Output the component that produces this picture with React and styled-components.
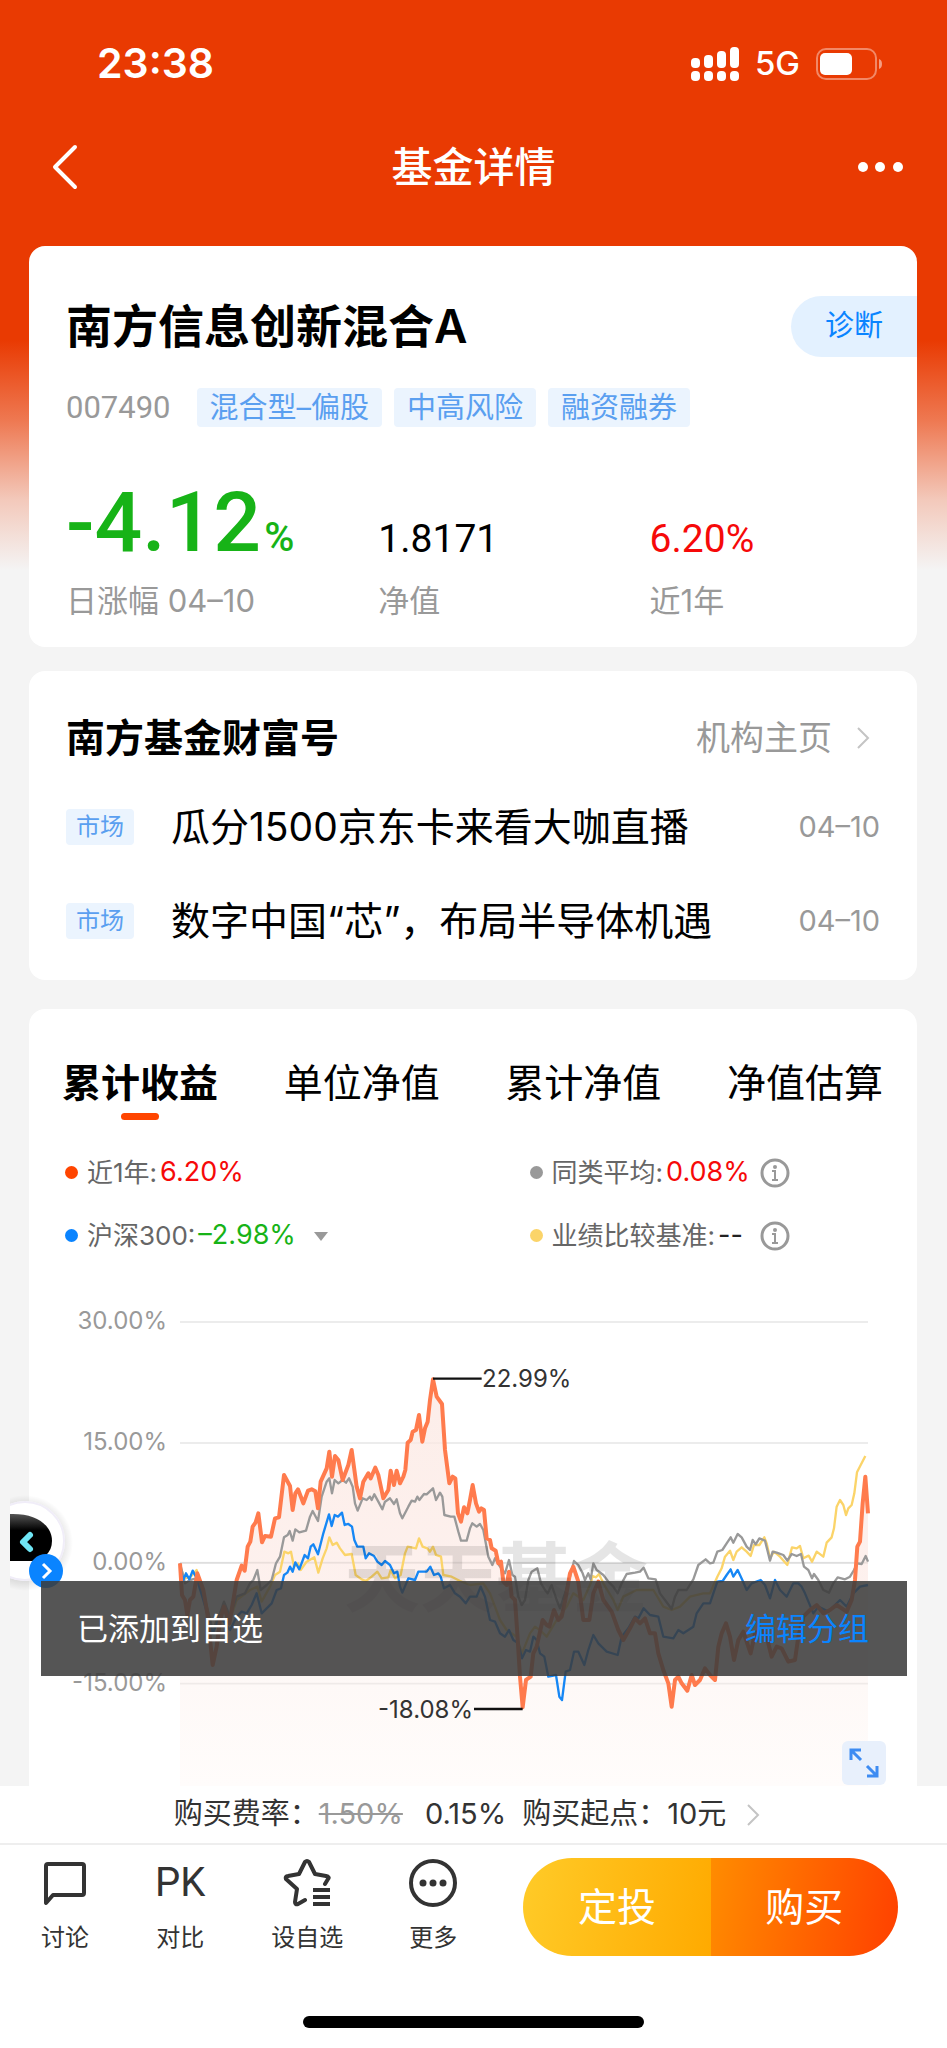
import React, {useState} from 'react';
import styled, {createGlobalStyle} from "styled-components";

const GlobalStyle = createGlobalStyle`
    * {
        box-sizing: border-box;
    }

    body {
        margin: 0;
        font-family: Inter, "Noto Sans CJK SC", sans-serif;
        line-height: 1.2;
        color: #000;
    }

    button {
        padding: 0;
        border: 0;
        background: none;
        font: inherit;
        color: inherit;
        cursor: pointer;
    }

    a {
        color: inherit;
        text-decoration: none;
    }

    svg {
        display: block;
        flex-shrink: 0;
    }

    h1, h2, p, ul {
        margin: 0;
        padding: 0;
    }
`;

const Page = styled.div`
    height: 100vh;
    display: flex;
    flex-direction: column;
    overflow: hidden;
    background: linear-gradient(#e93a02 340px, #ee7851 420px, #f3c9bb 500px, #f4f4f4 570px);
`;

const StatusBar = styled.div`
    display: flex;
    align-items: center;
    justify-content: space-between;
    height: 127px;
    padding: 0 64px 0 97px;
    color: #fff;
`;

const Clock = styled.span`
    font-size: 41px;
    font-weight: 600;
`;

const StatusIcons = styled.div`
    display: flex;
    align-items: center;
    gap: 16px;
    font-size: 33px;
    font-weight: 500;
`;

const NavBar = styled.header`
    display: grid;
    grid-template-columns: 1fr auto 1fr;
    align-items: center;
    height: 80px;
    padding: 0 43px;
    color: #fff;
`;

const NavTitle = styled.h1`
    font-size: 41px;
    line-height: 60px;
    font-weight: 500;
`;

const NavButton = styled.button`
    justify-self: ${(props) => (props.$end ? "end" : "start")};
`;

const Content = styled.main`
    position: relative;
    flex: 1;
    min-height: 0;
    overflow: hidden;
    padding: 39px 30px 0 29px;
`;

const Card = styled.section`
    border-radius: 16px;
    background: #fff;
`;

const FundCard = styled(Card)`
    margin-bottom: 24px;
    padding: 49px 0 26px 37px;
`;

const FundHead = styled.div`
    display: flex;
    align-items: center;
    justify-content: space-between;
`;

const FundName = styled.h2`
    font-size: 46px;
    line-height: 62px;
    font-weight: 600;
`;

const DiagnoseButton = styled.button`
    width: 126px;
    height: 61px;
    border-radius: 31px 0 0 31px;
    background: #e3f1ff;
    color: #0a84ff;
    font-size: 29px;
`;

const FundMeta = styled.div`
    display: flex;
    align-items: center;
    gap: 12px;
    margin-top: 31px;
`;

const FundCode = styled.span`
    margin-right: 14px;
    color: #999;
    font-family: Roboto, sans-serif;
    font-size: 31px;
    line-height: 39px;
`;

const Tag = styled.span`
    padding: 0 ${(props) => (props.$small ? 10 : 13)}px;
    border-radius: 4px;
    background: #ebf4fe;
    color: #5a9ff0;
    font-size: ${(props) => (props.$small ? 24 : 29)}px;
    line-height: ${(props) => (props.$small ? 36 : 39)}px;
    white-space: nowrap;
`;

const Stats = styled.div`
    display: grid;
    grid-template-columns: 38fr 33fr 29fr;
    align-items: end;
    margin-top: 52px;
    padding-right: 29px;
`;

const StatValue = styled.p`
    color: ${(props) => props.$color};
    font-family: Roboto, sans-serif;
    font-size: ${(props) => (props.$large ? 84 : 39)}px;
    line-height: ${(props) => (props.$large ? 88 : 56)}px;
    font-weight: ${(props) => (props.$large ? 500 : 400)};

    small {
        margin-left: 3px;
        font-size: 41px;
        line-height: 1;
    }
`;

const StatLabel = styled.p`
    margin-top: 14px;
    color: #999;
    font-size: 31px;
    line-height: 40px;
`;

const NewsCard = styled(Card)`
    margin-bottom: 29px;
    padding: 42px 37px 12px;
`;

const NewsHead = styled.div`
    display: flex;
    align-items: center;
    justify-content: space-between;
    margin-bottom: 17px;
    line-height: 50px;

    h2 {
        font-size: 39px;
        font-weight: 600;
    }
`;

const MoreLink = styled.a`
    display: flex;
    align-items: center;
    gap: 24px;
    padding-right: 10px;
    color: #999;
    font-size: 34px;
`;

const NewsItem = styled.a`
    display: flex;
    align-items: center;
    height: 94px;

    p {
        flex: 1;
        margin-left: 37px;
        font-size: 39px;
    }

    time {
        color: #999;
        font-size: 29px;
    }
`;

const ChartCard = styled(Card)`
    padding-top: 49px;
    border-radius: 16px 16px 0 0;
`;

const Tabs = styled.div`
    display: flex;
    justify-content: space-between;
    padding: 0 34px 0 33px;
`;

const Tab = styled.button`
    font-size: 39px;
    line-height: 50px;
    font-weight: ${(props) => (props.$active ? 700 : 400)};

    &::after {
        content: "";
        display: block;
        width: 38px;
        height: 7px;
        margin: 5px auto 0;
        border-radius: 4px;
        background: ${(props) => (props.$active ? "#ff4500" : "transparent")};
    }
`;

const Legend = styled.div`
    display: grid;
    grid-template-columns: 57fr 43fr;
    margin: 21px 0 33px;
    padding: 0 37px 0 36px;
`;

const LegendItem = styled.div`
    display: flex;
    align-items: center;
    height: 63px;
    color: #666;
    font-size: 26px;

    &::before {
        content: "";
        width: 13px;
        height: 13px;
        margin-right: 9px;
        border-radius: 50%;
        background: ${(props) => props.$dot};
    }
`;

const LegendValue = styled.span`
    min-width: 32px;
    margin: 0 10px 0 3px;
    color: ${(props) => props.$color};
    font-size: 27px;
`;

const ChartSvg = styled.svg`
    width: 100%;
    font-size: 24px;
`;

const ExpandButton = styled.button`
    position: absolute;
    right: 61px;
    bottom: 1px;
    display: grid;
    place-items: center;
    width: 44px;
    height: 44px;
    border-radius: 6px;
    background: #e8f0fc;
`;

const Assistant = styled.button`
    position: absolute;
    left: 10px;
    bottom: 193px;
`;

const Toast = styled.div`
    position: absolute;
    left: 41px;
    right: 40px;
    bottom: 110px;
    display: flex;
    align-items: center;
    justify-content: space-between;
    height: 95px;
    padding: 0 38px 0 36px;
    background: rgba(60, 60, 60, 0.87);
    color: #fff;
    font-size: 31px;

    a {
        color: #0a84ff;
    }
`;

const Footer = styled.footer`
    background: #fff;
`;

const FeeLink = styled.a`
    display: flex;
    align-items: center;
    justify-content: center;
    height: 59px;
    padding-right: 13px;
    border-bottom: 2px solid #eee;
    color: #333;
    font-size: 29px;
    white-space: nowrap;

    s {
        margin-right: 22px;
        color: #999;
    }

    span {
        margin-right: 16px;
    }

    svg {
        margin-left: 20px;
    }
`;

const ActionBar = styled.div`
    display: flex;
    align-items: center;
    gap: 66px;
    padding: 13px 49px 0 41px;
`;

const Action = styled.button`
    display: flex;
    flex-direction: column;
    align-items: center;
    gap: 13px;
    color: #333;
    font-size: 24px;
    line-height: 36px;
    white-space: nowrap;
`;

const PkMark = styled.b`
    font-family: Roboto, sans-serif;
    font-size: 40px;
    line-height: 48px;
    font-weight: 400;
`;

const TradeButtons = styled.div`
    flex: 1;
    display: flex;
    height: 98px;
    border-radius: 49px;
    overflow: hidden;
`;

const TradeButton = styled.button`
    flex: 1;
    background: linear-gradient(100deg, ${(props) => props.$from}, ${(props) => props.$to});
    color: #fff;
    font-size: 39px;
`;

const HomeIndicator = styled.div`
    width: 36%;
    height: 12px;
    margin: 60px auto 20px;
    border-radius: 6px;
    background: #000;
`;

const news = [
    {id: 1, title: "瓜分1500京东卡来看大咖直播", date: "04–10"},
    {id: 2, title: "数字中国“芯”，布局半导体机遇", date: "04–10"},
];

const tabs = ["累计收益", "单位净值", "累计净值", "净值估算"];

// series points, three units per pixel
const fundLine = "30,790 36,885 45,900 52,945 60,900 70,890 82,820 100,870 112,940 128,1095 140,1040 150,960 162,920 178,970 190,900 200,840 215,797 224,812 233,740 241,725 248,680 257,667 265,640 276,727 285,708 303,710 315,655 327,652 342,525 360,558 368,630 376,580 384,568 400,610 414,572 425,568 436,574 444,625 452,545 470,505 478,455 486,530 495,468 505,480 518,540 535,495 545,450 560,560 570,595 580,545 595,520 602,535 616,503 625,525 640,595 655,570 662,512 672,555 680,512 690,550 700,530 706,510 713,428 722,420 728,395 738,390 747,345 757,425 765,385 773,365 780,300 789,238 800,290 816,312 825,450 838,550 848,530 856,535 864,640 873,665 882,622 892,640 900,600 908,555 918,610 927,635 934,625 942,630 950,715 960,720 965,745 977,752 985,790 993,785 1000,845 1010,855 1017,815 1025,890 1035,900 1042,1000 1050,1130 1058,1222 1068,1140 1082,1130 1090,1060 1100,1040 1118,960 1130,975 1138,980 1152,930 1165,960 1175,950 1185,905 1200,820 1210,800 1225,845 1240,960 1258,960 1270,880 1285,845 1300,900 1325,935 1345,990 1360,1020 1380,985 1395,955 1410,970 1425,955 1440,1000 1455,1000 1465,1060 1480,1110 1495,1150 1505,1220 1515,1140 1525,1130 1535,1150 1552,1172 1565,1125 1575,1155 1590,1140 1605,1105 1620,1125 1635,1140 1645,1040 1655,1000 1668,970 1680,1010 1692,1080 1705,1020 1720,995 1735,1040 1742,1060 1755,1000 1775,990 1790,1010 1805,1070 1820,1040 1835,1045 1855,1085 1875,1080 1885,1010 1900,950 1920,930 1940,915 1960,940 1980,930 2000,915 2030,935 2045,900 2055,840 2062,740 2070,725 2078,610 2086,530 2094,640";

const averageLine = "30,790 45,850 60,840 80,835 100,880 128,990 150,940 162,905 180,950 200,890 225,880 240,850 250,840 262,810 272,870 290,855 305,840 318,790 330,770 342,712 353,705 359,693 368,722 376,688 388,697 408,692 420,650 428,633 444,663 455,590 470,545 478,535 486,580 494,540 505,550 518,540 528,548 537,535 548,560 555,610 563,632 578,595 590,600 600,590 605,600 613,583 625,605 637,628 645,605 660,595 672,612 680,598 690,640 697,655 715,620 725,602 735,605 742,590 748,600 762,582 770,583 789,565 798,600 810,578 817,590 823,645 842,650 853,650 865,695 873,722 890,722 900,685 907,670 920,680 930,672 940,690 955,770 967,795 975,775 990,800 1005,820 1017,780 1027,825 1035,830 1045,890 1055,915 1065,900 1075,840 1085,815 1102,805 1113,850 1125,870 1133,880 1145,855 1160,900 1170,925 1185,880 1200,830 1212,783 1225,795 1238,820 1245,840 1255,820 1262,838 1270,790 1280,810 1300,825 1315,845 1330,860 1343,880 1355,850 1370,822 1395,818 1410,815 1421,803 1435,835 1457,838 1470,880 1485,900 1505,927 1515,890 1525,870 1550,870 1570,838 1585,795 1607,778 1620,790 1630,788 1642,755 1657,750 1670,730 1682,712 1690,728 1703,702 1715,712 1730,740 1740,750 1748,720 1757,733 1768,715 1785,722 1792,750 1800,782 1808,755 1820,758 1840,765 1852,782 1865,762 1880,768 1893,762 1902,800 1915,810 1926,835 1932,822 1945,840 1960,870 1977,878 1990,850 2003,832 2025,838 2040,830 2052,810 2062,790 2075,792 2087,768 2094,785";

const indexLine = "30,800 40,840 48,820 58,838 68,812 80,835 100,900 128,1000 150,950 180,990 200,950 215,935 230,940 245,915 260,880 275,940 290,925 305,910 320,870 333,865 342,825 352,818 360,800 368,815 376,787 388,808 404,765 414,775 422,740 430,733 444,763 460,700 477,643 485,678 494,645 504,650 516,638 524,675 535,672 546,680 553,720 562,740 580,740 587,775 597,760 612,768 622,785 635,795 645,783 660,795 672,820 682,815 690,860 697,878 715,835 735,840 745,815 770,815 781,800 792,825 805,820 812,830 822,865 840,855 855,880 870,890 887,910 900,890 920,890 932,860 945,890 960,960 975,965 990,1000 1005,1010 1017,990 1030,1020 1045,1030 1056,1075 1068,1050 1080,1055 1090,1010 1100,1020 1110,1060 1123,1070 1135,1130 1158,1125 1168,1190 1176,1200 1187,1115 1200,1110 1212,1055 1225,1055 1243,1095 1255,1050 1270,1005 1285,1030 1310,1055 1343,1065 1355,1010 1375,985 1395,950 1405,955 1421,925 1440,945 1465,950 1480,1010 1510,1015 1525,990 1540,1000 1570,980 1580,940 1600,910 1620,910 1630,880 1642,845 1658,843 1670,825 1682,808 1690,830 1703,810 1717,840 1730,870 1745,850 1772,840 1785,855 1800,895 1815,840 1830,870 1850,890 1870,850 1885,850 1895,860 1905,880 1930,940 1945,920 1975,935 2010,900 2030,920 2050,880 2070,860 2094,855";

const benchmarkLine = "30,800 45,835 62,830 80,810 100,880 128,990 160,920 180,960 200,900 240,870 262,860 275,905 300,860 315,825 330,815 343,755 355,760 363,755 372,800 384,790 392,810 410,785 433,772 445,818 458,775 470,745 478,712 488,735 500,728 510,745 525,765 545,762 557,825 575,838 588,843 605,830 622,815 635,835 655,832 662,810 675,835 692,825 705,760 713,740 738,745 747,715 758,740 772,745 780,755 789,740 798,765 813,770 820,825 845,830 870,843 900,855 940,850 960,880 990,960 1010,990 1040,1010 1056,1060 1080,1000 1095,980 1110,990 1130,1010 1160,960 1190,920 1210,880 1240,900 1262,850 1268,828 1278,832 1287,822 1300,850 1330,900 1343,930 1360,890 1400,870 1450,870 1480,920 1505,930 1530,920 1560,890 1600,880 1620,880 1642,830 1655,805 1665,770 1680,752 1690,780 1700,755 1715,742 1730,755 1742,768 1752,735 1768,735 1783,712 1790,730 1800,775 1812,755 1830,770 1852,795 1866,742 1880,745 1890,738 1900,775 1916,767 1926,785 1940,755 1960,770 1970,728 1985,712 1992,685 2000,620 2010,600 2020,615 2028,645 2035,625 2045,615 2053,580 2061,517 2086,468";

const gridLines = [
    {y: 22, label: "30.00%"},
    {y: 143, label: "15.00%"},
    {y: 263, label: "0.00%"},
    {y: 384, label: "-15.00%"},
];

const SignalIcon = () => (
    <svg width="48" height="36" viewBox="0 0 48 36" fill="#fff">
        {[0, 1, 2, 3].map((i) => (
            <g key={i}>
                <rect x={i * 13} y={[12, 9, 5, 1][i]} width="9" height={[10, 13, 17, 21][i]} rx="4"/>
                <rect x={i * 13} y="25" width="9" height="10" rx="4"/>
            </g>
        ))}
    </svg>
);

const BatteryIcon = () => (
    <svg width="67" height="32" viewBox="0 0 67 32" fill="none">
        <rect x="1" y="1" width="59" height="30" rx="9" stroke="#fff" strokeOpacity=".4" strokeWidth="2"/>
        <rect x="4" y="5" width="32" height="22" rx="5" fill="#fff"/>
        <path d="M63 11c4 1 4 9 0 10z" fill="#fff" fillOpacity=".5"/>
    </svg>
);

const ChevronRight = () => (
    <svg width="14" height="24" viewBox="0 0 14 24" fill="none" stroke="#c4c4c4" strokeWidth="2">
        <path d="M2 2l10 10L2 22"/>
    </svg>
);

const InfoIcon = () => (
    <svg width="30" height="30" viewBox="0 0 30 30" fill="none" stroke="#999" strokeWidth="2">
        <circle cx="15" cy="15" r="13" strokeWidth="3"/>
        <path d="M12 13h3v9M12 22h6"/>
        <circle cx="15" cy="9" r="2" fill="#999" stroke="none"/>
    </svg>
);

const InfoButton = () => <button aria-label="说明"><InfoIcon/></button>;

const Chart = () => (
    <ChartSvg viewBox="0 0 888 486" role="img" aria-label="累计收益">
        <defs>
            <linearGradient id="fundArea" x1="0" y1="0" x2="0" y2="1">
                <stop offset="0" stopColor="#fbe6e0" stopOpacity=".7"/>
                <stop offset=".55" stopColor="#fdeeea" stopOpacity=".8"/>
                <stop offset=".75" stopColor="#fef9f7"/>
                <stop offset="1" stopColor="#fffcfb"/>
            </linearGradient>
        </defs>
        {gridLines.map(({y, label}) => (
            <g key={label}>
                <path d={`M151 ${y}H839`} stroke="#ececec" strokeWidth="2"/>
                <text x="138" y={y + 7} fill="#999" textAnchor="end">{label}</text>
            </g>
        ))}
        <g transform="translate(141 0) scale(.33333)" fill="none" strokeLinejoin="round">
            <polygon points={`30,1458 ${fundLine} 2094,1458`} fill="url(#fundArea)"/>
            <path d="M30 788H2094M30 1151H2094" stroke="#000" strokeOpacity=".06" strokeWidth="5"/>
            <polyline points={benchmarkLine} stroke="#fbd469" strokeWidth="7"/>
            <polyline points={averageLine} stroke="#999" strokeWidth="7"/>
            <polyline points={indexLine} stroke="#1687f5" strokeWidth="7"/>
            <polyline points={fundLine} stroke="#ff7b4d" strokeWidth="12"/>
            <path d="M789 236H935M912 1227H1058" stroke="#111" strokeWidth="7"/>
        </g>
        <text x="315" y="306" fill="#000" fillOpacity=".1" fontSize="76" fontWeight="700">天天基金</text>
        <text x="453" y="87" fill="#333">22.99%</text>
        <text x="444" y="418" fill="#333" textAnchor="end">-18.08%</text>
    </ChartSvg>
);

const AssistantIcon = () => (
    <svg width="64" height="104" viewBox="0 0 64 104">
        <defs>
            <radialGradient id="halo">
                <stop offset=".75" stopColor="#000" stopOpacity=".12"/>
                <stop offset="1" stopColor="#000" stopOpacity="0"/>
            </radialGradient>
            <linearGradient id="visor" x1="0" y1="0" x2="0" y2="1">
                <stop offset="0" stopColor="#555"/>
                <stop offset=".35" stopColor="#000"/>
            </linearGradient>
        </defs>
        <circle cx="15" cy="54" r="48" fill="url(#halo)"/>
        <circle cx="15" cy="52" r="40" fill="#fff"/>
        <circle cx="15" cy="52" r="39" fill="none" stroke="#f0edf8" strokeWidth="2"/>
        <path d="M0 25c26-1 42 11 42 27 0 12-9 19-20 20H0z" fill="url(#visor)"/>
        <path d="M20 46l-7 7 7 7" fill="none" stroke="#6fe6f5" strokeWidth="6" strokeLinecap="round" strokeLinejoin="round"/>
        <circle cx="36" cy="82" r="17" fill="#0a84ff"/>
        <path d="M33 75l7 7-7 7" fill="none" stroke="#fff" strokeWidth="3"/>
    </svg>
);

const CommentIcon = () => (
    <svg width="48" height="48" viewBox="0 0 48 48" fill="none" stroke="#333" strokeWidth="4" strokeLinejoin="round">
        <path d="M5 44V7q0-2 2-2h34q2 0 2 2v27q0 2-2 2H12z"/>
    </svg>
);

const StarListIcon = () => (
    <svg width="48" height="48" viewBox="0 0 48 48" fill="none" stroke="#333" strokeWidth="4" strokeLinecap="round" strokeLinejoin="round">
        <path d="M22 41l-7 4q-3 1-3-2l2-13-11-10q-1-3 2-3l11-2 6-12q2-2 4 0l6 12 11 2q4 1 2 3l-3 5"/>
        <path d="M30 31h17M30 38h17M30 45h17" strokeLinecap="butt"/>
    </svg>
);

const MoreIcon = () => (
    <svg width="48" height="48" viewBox="0 0 48 48" fill="none">
        <circle cx="24" cy="24" r="22" stroke="#333" strokeWidth="4"/>
        <g fill="#333">
            <circle cx="14" cy="24" r="3.500"/>
            <circle cx="24" cy="24" r="3.500"/>
            <circle cx="34" cy="24" r="3.500"/>
        </g>
    </svg>
);

function FundDetail() {
    const [activeTab, setActiveTab] = useState(0);

    return (
        <Page>
            <GlobalStyle/>
            <StatusBar>
                <Clock>23:38</Clock>
                <StatusIcons>
                    <SignalIcon/>
                    <span>5G</span>
                    <BatteryIcon/>
                </StatusIcons>
            </StatusBar>
            <NavBar>
                <NavButton aria-label="返回">
                    <svg width="38" height="48" viewBox="0 0 38 48" fill="none" stroke="#fff" strokeWidth="4" strokeLinecap="round" strokeLinejoin="round">
                        <path d="M32 4L12 24l20 20"/>
                    </svg>
                </NavButton>
                <NavTitle>基金详情</NavTitle>
                <NavButton $end aria-label="更多">
                    <svg width="46" height="12" viewBox="0 0 46 12" fill="#fff">
                        <circle cx="5" cy="6" r="5"/>
                        <circle cx="22" cy="6" r="5"/>
                        <circle cx="40" cy="6" r="5"/>
                    </svg>
                </NavButton>
            </NavBar>

            <Content>
                <FundCard>
                    <FundHead>
                        <FundName>南方信息创新混合A</FundName>
                        <DiagnoseButton>诊断</DiagnoseButton>
                    </FundHead>
                    <FundMeta>
                        <FundCode>007490</FundCode>
                        <Tag>混合型–偏股</Tag>
                        <Tag>中高风险</Tag>
                        <Tag>融资融券</Tag>
                    </FundMeta>
                    <Stats>
                        <div>
                            <StatValue $large $color="#17b317">-4.12<small>%</small></StatValue>
                            <StatLabel>日涨幅 04–10</StatLabel>
                        </div>
                        <div>
                            <StatValue $color="#000">1.8171</StatValue>
                            <StatLabel>净值</StatLabel>
                        </div>
                        <div>
                            <StatValue $color="#f60909">6.20%</StatValue>
                            <StatLabel>近1年</StatLabel>
                        </div>
                    </Stats>
                </FundCard>

                <NewsCard>
                    <NewsHead>
                        <h2>南方基金财富号</h2>
                        <MoreLink href="#org">机构主页<ChevronRight/></MoreLink>
                    </NewsHead>
                    {news.map(({id, title, date}) => (
                        <NewsItem key={id} href="#news">
                            <Tag $small>市场</Tag>
                            <p>{title}</p>
                            <time>{date}</time>
                        </NewsItem>
                    ))}
                </NewsCard>

                <ChartCard>
                    <Tabs role="tablist">
                        {tabs.map((name, i) => (
                            <Tab key={name} role="tab" aria-selected={i === activeTab} $active={i === activeTab} onClick={() => setActiveTab(i)}>
                                {name}
                            </Tab>
                        ))}
                    </Tabs>
                    <Legend>
                        <LegendItem $dot="#ff4500">
                            近1年:<LegendValue $color="#f60909">6.20%</LegendValue>
                        </LegendItem>
                        <LegendItem $dot="#999">
                            同类平均:<LegendValue $color="#f60909">0.08%</LegendValue>
                            <InfoButton/>
                        </LegendItem>
                        <LegendItem $dot="#0a84ff">
                            沪深300:<LegendValue $color="#17b317">–2.98%</LegendValue>
                            <button aria-label="选择指数" aria-haspopup="listbox">
                                <svg width="30" height="14" viewBox="0 0 30 14">
                                    <path d="M8 3h14l-7 9z" fill="#999"/>
                                </svg>
                            </button>
                        </LegendItem>
                        <LegendItem $dot="#fbd469">
                            业绩比较基准:<LegendValue $color="#222">--</LegendValue>
                            <InfoButton/>
                        </LegendItem>
                    </Legend>
                    <Chart/>
                </ChartCard>

                <ExpandButton aria-label="全屏">
                    <svg width="32" height="32" viewBox="0 0 32 32" fill="none" stroke="#3d8bf2" strokeWidth="3">
                        <path d="M3 13V3h10M3 3l10 10M19 29h10V19M29 29L19 19"/>
                    </svg>
                </ExpandButton>
                <Assistant aria-label="智能助手"><AssistantIcon/></Assistant>
                <Toast role="status">
                    已添加到自选
                    <a href="#group">编辑分组</a>
                </Toast>
            </Content>

            <Footer>
                <FeeLink href="#fee">
                    购买费率：<s>1.50%</s>
                    <span>0.15%</span>
                    购买起点：10元
                    <ChevronRight/>
                </FeeLink>
                <ActionBar>
                    <Action><CommentIcon/>讨论</Action>
                    <Action><PkMark>PK</PkMark>对比</Action>
                    <Action><StarListIcon/>设自选</Action>
                    <Action><MoreIcon/>更多</Action>
                    <TradeButtons>
                        <TradeButton $from="#ffcb28" $to="#ffaa00">定投</TradeButton>
                        <TradeButton $from="#ff8c00" $to="#ff4000">购买</TradeButton>
                    </TradeButtons>
                </ActionBar>
                <HomeIndicator/>
            </Footer>
        </Page>
    );
}

export default FundDetail;
